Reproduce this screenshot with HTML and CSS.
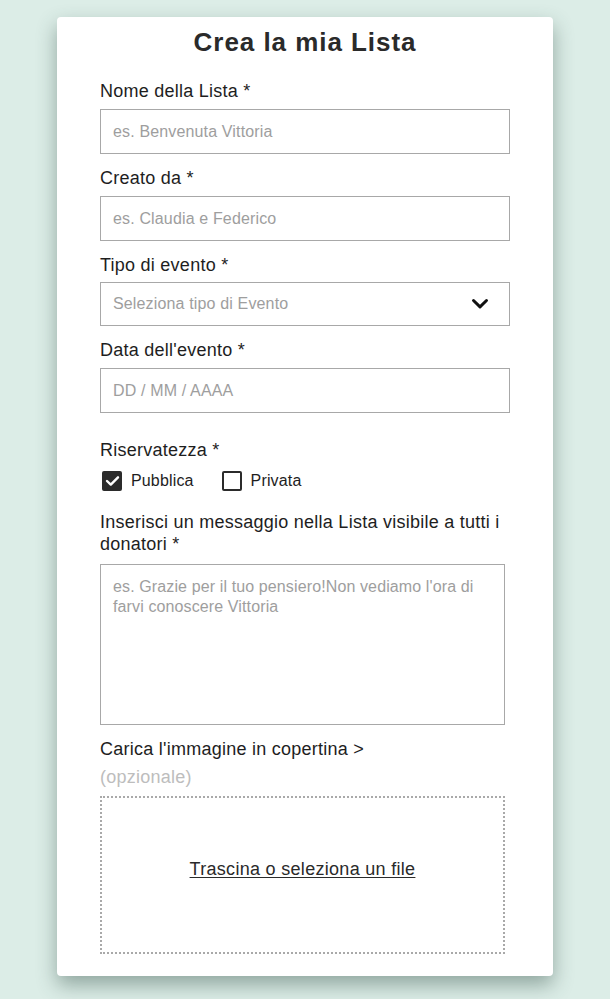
FILE: index.html
```html
<!DOCTYPE html>
<html lang="it">
<head>
<meta charset="utf-8">
<title>Crea la mia Lista</title>
<link rel="stylesheet" href="styles.css">
</head>
<body>
<main class="card">
  <h1 class="title">Crea la mia Lista</h1>

  <div class="field">
    <label class="label">Nome della Lista *</label>
    <div class="input placeholder">es. Benvenuta Vittoria</div>
  </div>

  <div class="field">
    <label class="label">Creato da *</label>
    <div class="input placeholder">es. Claudia e Federico</div>
  </div>

  <div class="field">
    <label class="label label-tight">Tipo di evento *</label>
    <div class="input select placeholder">
      <span>Seleziona tipo di Evento</span>
      <svg class="chevron" width="18" height="12" viewBox="0 0 18 12"><path d="M2.5 2.5 L9 8.8 L15.5 2.5" fill="none" stroke="#111" stroke-width="3" stroke-linecap="round" stroke-linejoin="round"/></svg>
    </div>
  </div>

  <div class="field">
    <label class="label">Data dell'evento *</label>
    <div class="input placeholder">DD / MM / AAAA</div>
  </div>

  <div class="field privacy">
    <label class="label">Riservatezza *</label>
    <div class="checks">
      <span class="check">
        <span class="box checked"><svg width="15" height="12" viewBox="0 0 15 12"><path d="M2 6 L5.8 9.6 L13 2.3" fill="none" stroke="#fff" stroke-width="2.4" stroke-linecap="round" stroke-linejoin="round"/></svg></span>
        <span class="check-text">Pubblica</span>
      </span>
      <span class="check">
        <span class="box"></span>
        <span class="check-text">Privata</span>
      </span>
    </div>
  </div>

  <div class="field message">
    <label class="label">Inserisci un messaggio nella Lista visibile a tutti i donatori *</label>
    <div class="textarea placeholder">es. Grazie per il tuo pensiero!Non vediamo l'ora di farvi conoscere Vittoria</div>
  </div>

  <div class="field upload">
    <label class="label">Carica l'immagine in copertina &gt;</label>
    <div class="optional">(opzionale)</div>
    <div class="dropzone"><a class="drop-link" href="#">Trascina o seleziona un file</a></div>
  </div>
</main>
</body>
</html>
```

FILE: styles.css
```css
html, body {
  margin: 0;
  padding: 0;
}
body {
  background: #dcede7;
  font-family: "Liberation Sans", Arial, sans-serif;
  color: #222;
  padding-top: 17px;
  height: 999px;
  box-sizing: border-box;
  overflow: hidden;
}
.card {
  width: 496px;
  margin: 0 0 0 57px;
  box-sizing: border-box;
  background: #fff;
  border-radius: 4px;
  padding: 10px 43px 22px;
  box-shadow: 0 9px 20px rgba(50, 80, 70, 0.45);
}
.title {
  margin: 0 0 23px;
  font-size: 26px;
  line-height: 30px;
  font-weight: bold;
  text-align: center;
  letter-spacing: 0.95px;
  color: #2a2a2a;
}
.field {
  margin-bottom: 13px;
}
.label {
  display: block;
  font-size: 18px;
  line-height: 22px;
  letter-spacing: 0.25px;
  margin-bottom: 7px;
  color: #1e1e1e;
}
.label-tight {
  margin-bottom: 6px;
}
.input {
  height: 45px;
  box-sizing: border-box;
  border: 1px solid #a8a8a8;
  padding: 0 12px;
  display: flex;
  align-items: center;
  font-size: 16px;
  letter-spacing: 0.15px;
}
.placeholder {
  color: #9e9e9e;
}
.select {
  height: 44px;
  justify-content: space-between;
  padding-right: 20px;
}
.chevron {
  display: block;
}
.privacy {
  margin-top: 26px;
  margin-bottom: 20px;
}
.privacy .label {
  margin-bottom: 10px;
}
.checks {
  display: flex;
  align-items: center;
  gap: 28px;
  padding-left: 2px;
  height: 20px;
}
.check {
  display: flex;
  align-items: center;
  gap: 9px;
}
.box {
  width: 20px;
  height: 20px;
  box-sizing: border-box;
  border: 2px solid #2b2b2b;
  border-radius: 2px;
  display: flex;
  align-items: center;
  justify-content: center;
}
.box.checked {
  background: #2b2b2b;
}
.check-text {
  font-size: 16px;
  letter-spacing: 0.15px;
  color: #1e1e1e;
}
.message .label {
  margin-bottom: 9px;
}
.textarea {
  width: 405px;
  height: 161px;
  box-sizing: border-box;
  border: 1px solid #a8a8a8;
  padding: 12px 12px;
  font-size: 16px;
  line-height: 20px;
  letter-spacing: 0.12px;
}
.upload {
  margin-top: 13px;
  margin-bottom: 0;
}
.upload .label {
  margin-bottom: 6px;
}
.optional {
  font-size: 18px;
  line-height: 22px;
  letter-spacing: 0.25px;
  color: #bdbdbd;
  margin-bottom: 8px;
}
.dropzone {
  width: 405px;
  height: 158px;
  box-sizing: border-box;
  border: 2px dotted #a9a9a9;
  display: flex;
  align-items: center;
  justify-content: center;
  padding-bottom: 12px;
}
.drop-link {
  font-size: 18px;
  letter-spacing: 0.3px;
  color: #2a2a2a;
  text-decoration: underline;
  text-underline-offset: 2px;
}
```
